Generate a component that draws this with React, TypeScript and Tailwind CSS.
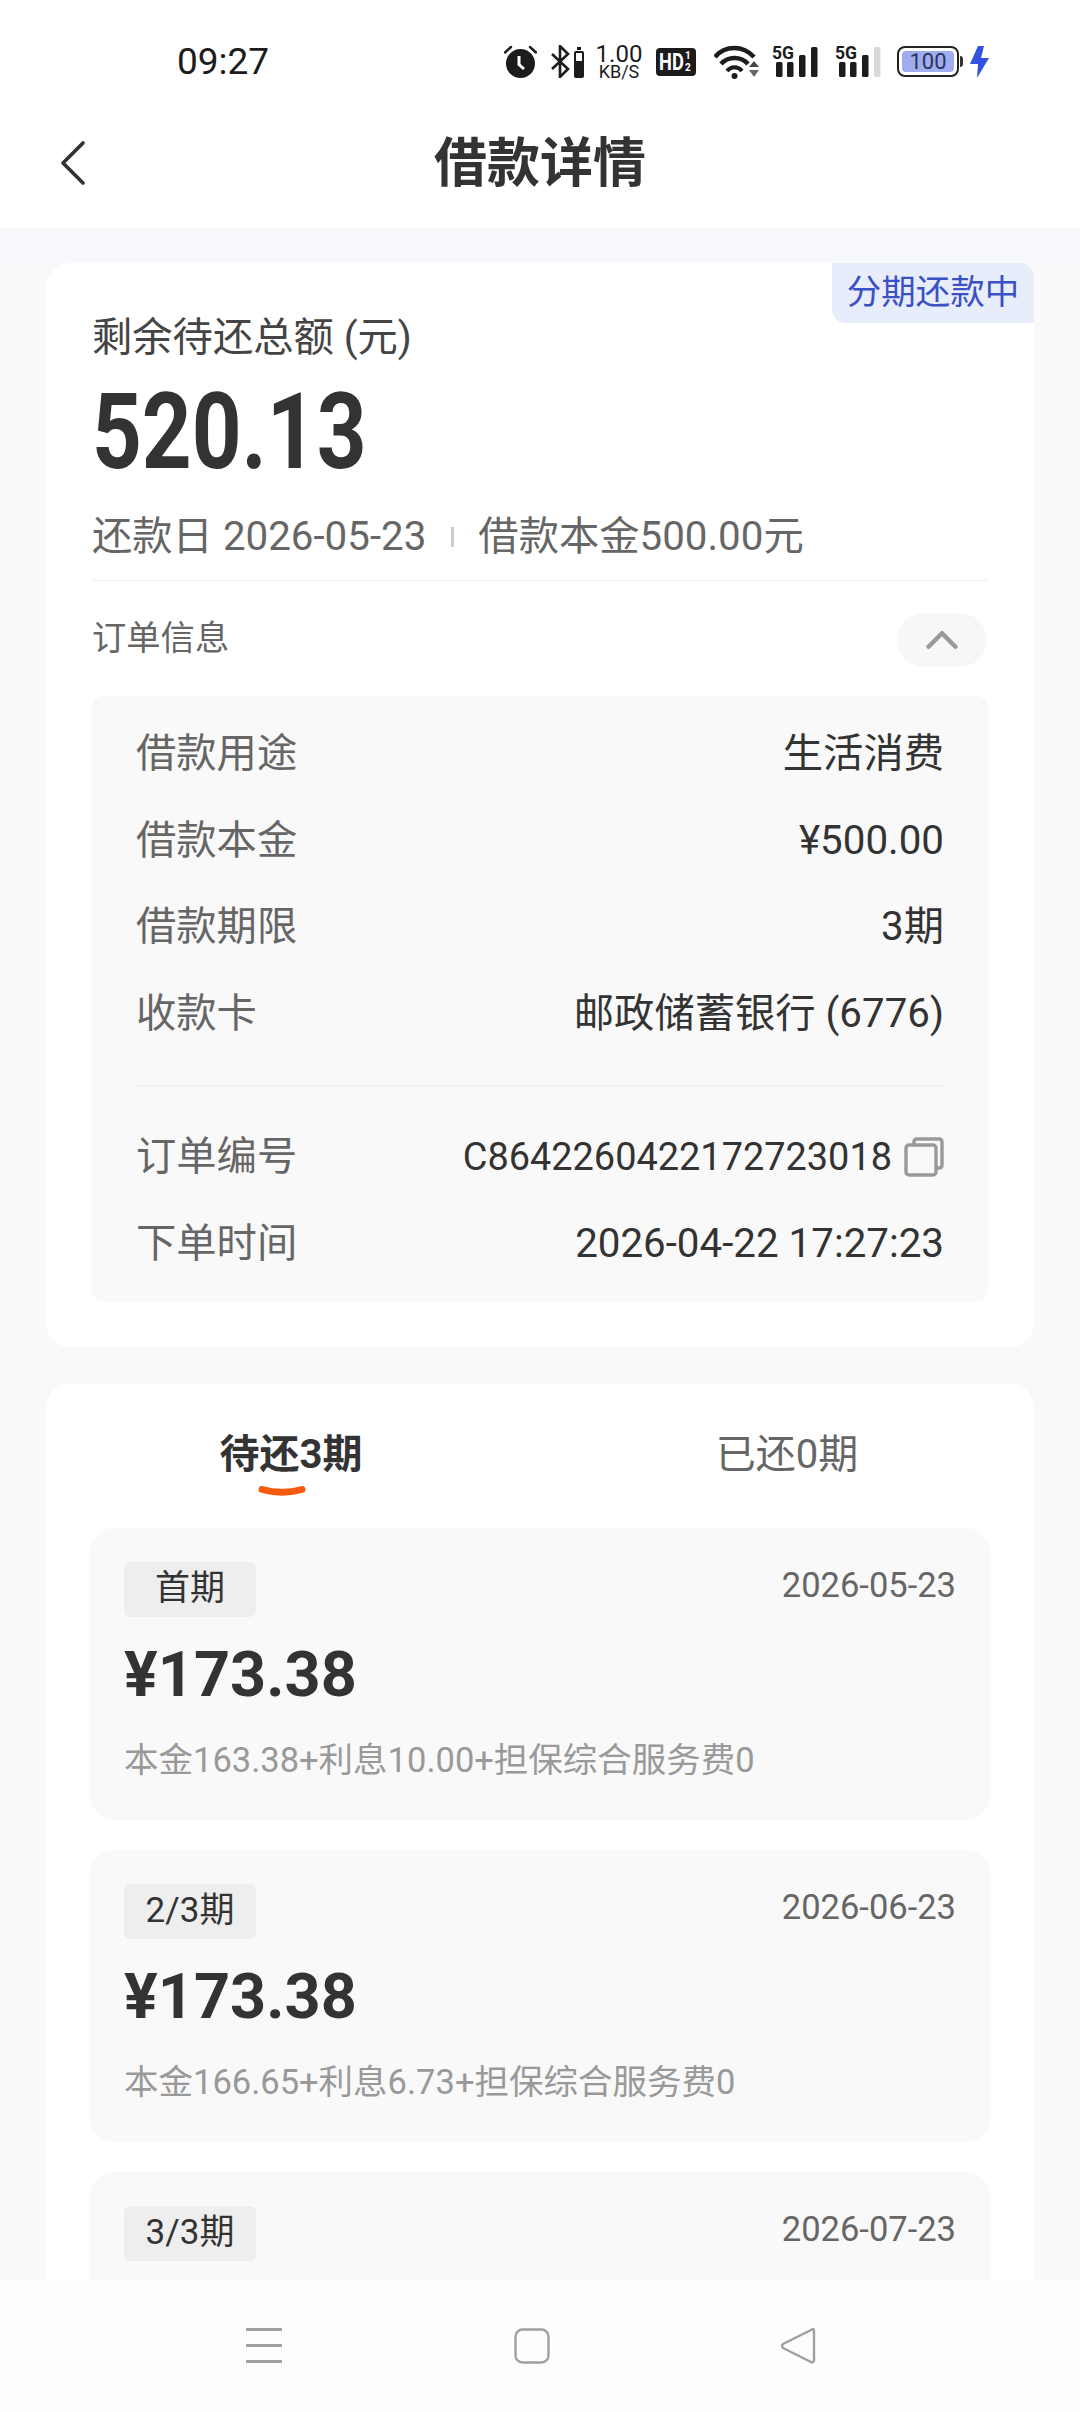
import { ChevronLeft, ChevronUp } from 'lucide-react';

const orderRows = [
  { label: '借款用途', value: '生活消费' },
  { label: '借款本金', value: '¥500.00' },
  { label: '借款期限', value: '3期' },
  { label: '收款卡', value: '邮政储蓄银行 (6776)' },
];

const installments = [
  { tag: '首期', date: '2026-05-23', amount: '¥173.38', detail: '本金163.38+利息10.00+担保综合服务费0' },
  { tag: '2/3期', date: '2026-06-23', amount: '¥173.38', detail: '本金166.65+利息6.73+担保综合服务费0' },
  { tag: '3/3期', date: '2026-07-23', amount: '¥173.38', detail: '本金170.00+利息3.38+担保综合服务费0' },
];

function AlarmIcon() {
  return (
    <svg width="33" height="33" viewBox="0 0 33 33">
      <circle cx="16.5" cy="18.5" r="14.5" fill="#1c1c1c" />
      <path d="M1 7.5 L7 2 M32 7.5 L26 2" stroke="#1c1c1c" strokeWidth="2.4" strokeLinecap="round" />
      <path d="M15 11 V19.5 L20 24" stroke="#fff" strokeWidth="3" fill="none" />
    </svg>
  );
}

function BluetoothIcon() {
  return (
    <svg width="33" height="33" viewBox="0 0 33 33">
      <path d="M1 9 L17 24 L9 32 V1 L17 9 L1 24" stroke="#1c1c1c" strokeWidth="2.6" fill="none" />
      <rect x="23" y="6" width="10" height="27" rx="2" fill="#1c1c1c" />
      <rect x="26" y="2" width="4" height="3" fill="#1c1c1c" />
      <rect x="25" y="8" width="6" height="8" fill="#fff" />
    </svg>
  );
}

function WifiIcon() {
  return (
    <svg width="45" height="34" viewBox="0 0 45 34">
      <path d="M1 12 C11 0 29 0 40 12" stroke="#1c1c1c" strokeWidth="4.4" fill="none" />
      <path d="M7 19 C14 11 27 11 34 19" stroke="#1c1c1c" strokeWidth="4.4" fill="none" />
      <path d="M13 26 C17 21 24 21 28 26" stroke="#1c1c1c" strokeWidth="4" fill="none" />
      <circle cx="20.5" cy="31" r="3" fill="#1c1c1c" />
      <path d="M35 22 L40 16 L45 22 Z" fill="#444" />
      <path d="M35 25 L45 25 L40 32 Z" fill="#666" />
    </svg>
  );
}

function SignalIcon({ weak }: { weak?: boolean }) {
  return (
    <svg className="overflow-visible" width="46" height="33" viewBox="0 0 46 33">
      <text x="0" y="14" fontSize="19" fontWeight="700" fontFamily="Roboto" fill="#1c1c1c" textLength="22" lengthAdjust="spacingAndGlyphs">
        5G
      </text>
      <rect x="4" y="17" width="6.5" height="15" rx="1.5" fill="#1c1c1c" />
      <rect x="15" y="17" width="6.5" height="15" rx="1.5" fill="#1c1c1c" />
      <rect x="27" y="10" width="6.5" height="22" rx="1.5" fill="#1c1c1c" />
      <rect x="39" y="2" width="6.5" height="30" rx="1.5" fill={weak ? '#d9d9d9' : '#1c1c1c'} />
    </svg>
  );
}

function BoltIcon() {
  return (
    <svg width="19" height="32" viewBox="0 0 19 32">
      <path d="M8 0 L0 18 H8 L7 32 L19 12 H11 L14 0 Z" fill="#3551e0" />
    </svg>
  );
}

function StatusBar() {
  return (
    <div className="flex h-[120px] items-center pl-[177px] pr-[91px] pt-[3px] text-[#1c1c1c]">
      <span className="text-[37px] leading-none">09:27</span>
      <div className="ml-auto flex items-center">
        <AlarmIcon />
        <div className="ml-[14px]">
          <BluetoothIcon />
        </div>
        <div className="ml-[11px] flex w-[48px] flex-col items-center">
          <span className="text-[24px] leading-[19px]">1.00</span>
          <span className="text-[18px] leading-[15px]">KB/S</span>
        </div>
        <div className="ml-[13px] flex h-[28px] w-[40px] items-center rounded-[4px] bg-[#1c1c1c] pl-[3px] font-bold leading-none text-white">
          <span className="w-[25px] origin-left scale-x-[0.76] text-[24px]">HD</span>
          <span className="ml-[1px] flex flex-col text-[10px] leading-[12px]">
            <span>1</span>
            <span>2</span>
          </span>
        </div>
        <div className="ml-[18px]">
          <WifiIcon />
        </div>
        <div className="ml-[13px]">
          <SignalIcon />
        </div>
        <div className="ml-[17px]">
          <SignalIcon weak />
        </div>
        <div className="ml-[16px] flex items-center">
          <div className="flex h-[31px] w-[62px] items-center rounded-[8px] border-2 border-[#222] p-[3px]">
            <div className="flex h-full w-full items-center justify-center rounded-[4px] bg-[#9fadf0] text-[22px] leading-none text-[#2a3358]">
              100
            </div>
          </div>
          <div className="ml-[1px] h-[11px] w-[3px] rounded-r-sm bg-[#333]" />
        </div>
        <div className="ml-[7px]">
          <BoltIcon />
        </div>
      </div>
    </div>
  );
}

function CopyIcon() {
  return (
    <svg width="40" height="40" viewBox="0 0 40 40" fill="none" stroke="#999" strokeWidth="3.4">
      <rect x="2" y="8" width="30" height="30" rx="3" />
      <path d="M10 8 V5 Q10 2 13 2 H35 Q38 2 38 5 V28 Q38 31 35 31 H32" />
    </svg>
  );
}

function InfoRow({ label, children }: { label: string; children: React.ReactNode }) {
  return (
    <div className="flex h-[86.5px] items-center justify-between text-[40.3px]">
      <span className="text-[#666]">{label}</span>
      <span className="flex items-center text-[#333]">{children}</span>
    </div>
  );
}

function InstallmentCard({ tag, date, amount, detail }: (typeof installments)[number]) {
  return (
    <div className="mb-[30px] h-[292px] shrink-0 rounded-[26px] bg-[#f9f9f9] px-[35px] pt-[34px]">
      <div className="flex items-start justify-between">
        <span className="flex h-[55px] w-[132px] items-center justify-center rounded-[6px] bg-[#eeeeee] text-[35px] text-[#333]">
          {tag}
        </span>
        <span className="text-[34.5px] leading-[46px] text-[#666]">{date}</span>
      </div>
      <div className="mt-[23px] text-[63px] font-bold leading-[70px] text-[#333]">{amount}</div>
      <div className="mt-[28px] text-[34.5px] leading-[44px] text-[#999]">{detail}</div>
    </div>
  );
}

export default function App() {
  return (
    <div className="flex h-[2412px] w-[1080px] flex-col overflow-hidden bg-[#f9f9f9] font-[Roboto,'Noto_Sans_CJK_SC',sans-serif]">
      <header className="h-[228px] shrink-0 bg-white">
        <StatusBar />
        <div className="relative flex h-[88px] items-center justify-center">
          <ChevronLeft className="absolute left-[33px] top-[3px] h-[80px] w-[80px] text-[#333]" strokeWidth={1.1} />
          <h1 className="text-[53px] font-bold leading-none text-[#333]">借款详情</h1>
        </div>
      </header>

      <div className="h-[35px] shrink-0 bg-[#f8f9fd]" />

      <main className="min-h-0 flex-1 overflow-hidden px-[46px]">
        {/* 订单卡片 */}
        <section className="relative rounded-[24px] bg-white px-[46px] pb-[45px] pt-[52px]">
          <span className="absolute right-0 top-0 flex h-[60px] w-[202px] items-center justify-center rounded-bl-[14px] rounded-tr-[14px] bg-[#e8edfb] text-[34.5px] text-[#3b50c4]">
            分期还款中
          </span>
          <div className="text-[40.3px] leading-[46px] text-[#444]">剩余待还总额 (元)</div>
          <div className="mt-[11px] origin-left scale-x-[0.82] text-[106px] font-bold leading-[120px] text-[#333]">520.13</div>
          <div className="mt-[17px] flex items-center text-[40.3px] leading-[56px] text-[#666]">
            <span>还款日 2026-05-23</span>
            <span className="ml-[25px] mr-[24px] h-[20px] w-[3px] bg-[#ccc]" />
            <span>借款本金500.00元</span>
          </div>
          <div className="mt-[15px] h-px bg-[#eeeeee]" />
          <div className="mt-[32px] flex h-[54px] items-center justify-between">
            <span className="pb-[3px] text-[34.3px] text-[#666]">订单信息</span>
            <span className="mr-px flex h-[54px] w-[90px] items-center justify-center rounded-full bg-[#f7f7f7]">
              <ChevronUp className="h-[54px] w-[54px] text-[#999]" strokeWidth={2} />
            </span>
          </div>
          <div className="mt-[29px] rounded-[12px] bg-[#f9f9f9] px-[44px] pb-[15px] pt-[15px]">
            {orderRows.map((row) => (
              <InfoRow key={row.label} label={row.label}>
                {row.value}
              </InfoRow>
            ))}
            <div className="my-[28px] h-px bg-[#efefef]" />
            <InfoRow label="订单编号">
              <span className="text-[37.9px]">C8642260422172723018</span>
              <span className="ml-[12px]">
                <CopyIcon />
              </span>
            </InfoRow>
            <InfoRow label="下单时间">2026-04-22 17:27:23</InfoRow>
          </div>
        </section>

        {/* 还款计划 */}
        <section className="mt-[37px] rounded-t-[24px] bg-white px-[43px]">
          <div className="-mx-[43px] grid h-[144px] grid-cols-2 items-center pb-[2px] text-[40px]">
            <div className="relative pr-[4px] text-center font-bold text-[#333]">
              待还3期
              <svg className="absolute left-[212px] top-[61px]" width="48" height="13" viewBox="0 0 48 13">
                <path d="M4 3.5 Q24 9 44 3.5" stroke="#f65a0f" strokeWidth="7" strokeLinecap="round" fill="none" />
              </svg>
            </div>
            <div className="text-center text-[#666]">已还0期</div>
          </div>
          <div className="flex flex-col">
            {installments.map((item) => (
              <InstallmentCard key={item.tag} {...item} />
            ))}
          </div>
        </section>
      </main>

      <nav className="flex h-[132px] shrink-0 items-start bg-[#fdfdfd] pl-[246px] pt-[48px]">
        <svg width="36" height="36" viewBox="0 0 36 36" fill="#a0a0a0">
          <rect x="0" y="0" width="36" height="3" />
          <rect x="0" y="16" width="36" height="3" />
          <rect x="0" y="32" width="36" height="3" />
        </svg>
        <svg className="ml-[232px]" width="36" height="36" viewBox="0 0 36 36" fill="none" stroke="#a0a0a0" strokeWidth="2.4">
          <rect x="1.5" y="1.5" width="33" height="33" rx="7" />
        </svg>
        <svg className="ml-[231px]" width="36" height="36" viewBox="0 0 36 36" fill="none" stroke="#a0a0a0" strokeWidth="2.4">
          <path d="M33 3 Q33 0 30 2 L2 16 Q0 18 2 20 L30 34 Q33 35 33 32 Z" strokeLinejoin="round" />
        </svg>
      </nav>
    </div>
  );
}
